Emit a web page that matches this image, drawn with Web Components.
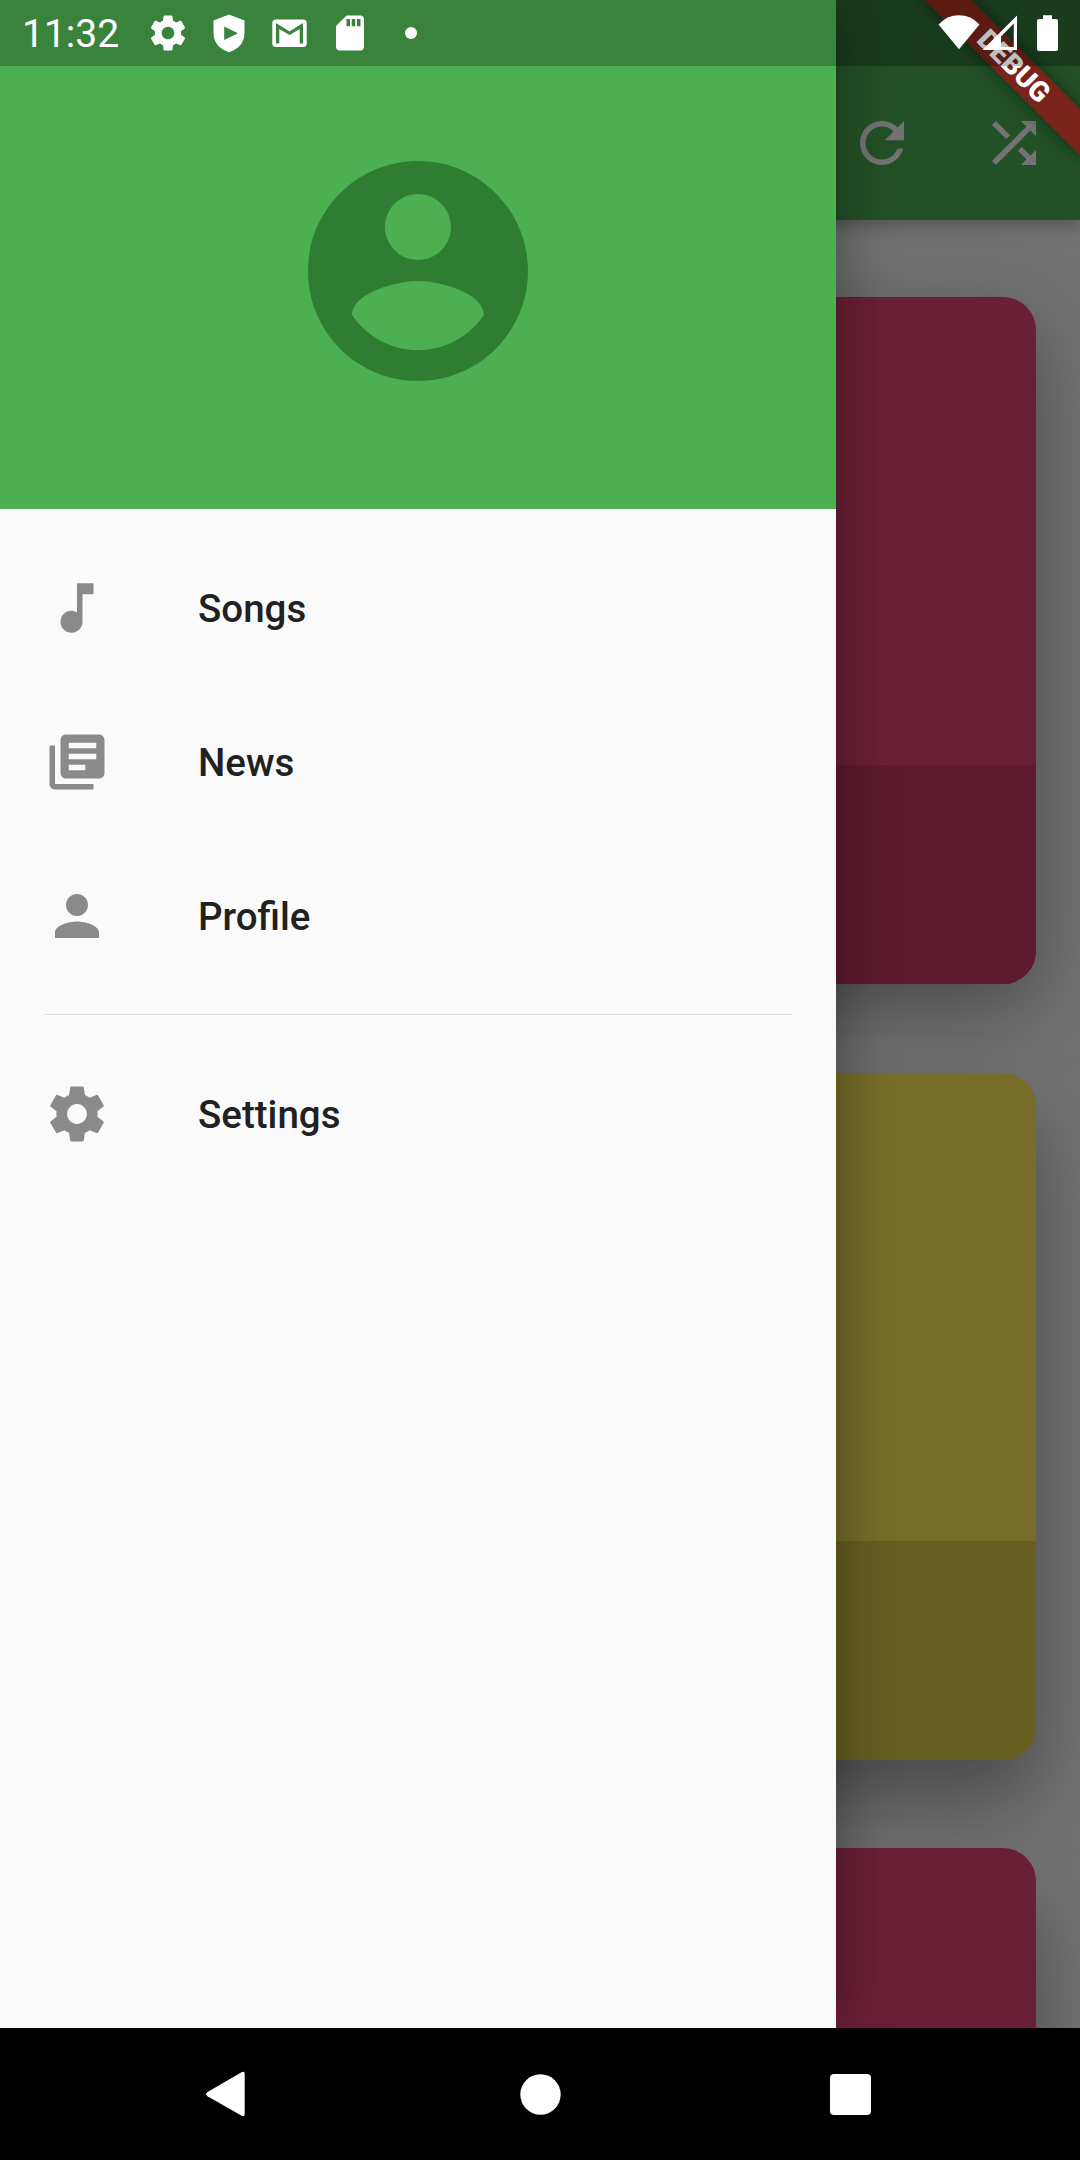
<!DOCTYPE html>
<html lang="en">
<head>
<meta charset="utf-8">
<title>Songs</title>
<style>
html, body { margin: 0; padding: 0; background: #000; }
body { width: 1080px; height: 2160px; overflow: hidden; font-family: Roboto, "Noto Sans", sans-serif; }
</style>
</head>
<body>
<phone-screen>
  <app-page slot="page">
    <app-bar slot="bar">
      <md-icon name="refresh"></md-icon>
      <md-icon name="shuffle"></md-icon>
    </app-bar>
    <song-card style="--top:#6b1f36;--bottom:#5e1a2f;--drop:26px;--shade:.36"></song-card>
    <song-card style="--top:#766d28;--bottom:#665f22;--drop:42px;--shade:.36"></song-card>
    <song-card style="--top:#6b1f36;--bottom:#5e1a2f;--drop:54px;--shade:.36"></song-card>
  </app-page>
  <nav-drawer slot="drawer">
    <md-icon slot="avatar" name="account" style="--size:264px;color:#2f7d32"></md-icon>
    <drawer-item icon="note">Songs</drawer-item>
    <drawer-item icon="library">News</drawer-item>
    <drawer-item icon="person">Profile</drawer-item>
    <drawer-divider></drawer-divider>
    <drawer-item icon="settings">Settings</drawer-item>
  </nav-drawer>
  <debug-banner slot="over">DEBUG</debug-banner>
  <status-bar slot="over">11:32</status-bar>
  <system-nav slot="nav"></system-nav>
</phone-screen>

<script>
const ICONS = {
  refresh: 'M17.65 6.35C16.2 4.9 14.21 4 12 4c-4.42 0-7.99 3.58-7.99 8s3.57 8 7.99 8c3.73 0 6.84-2.55 7.73-6h-2.08c-.82 2.33-3.04 4-5.65 4-3.31 0-6-2.69-6-6s2.69-6 6-6c1.66 0 3.14.69 4.22 1.78L13 11h7V4l-2.35 2.35z',
  shuffle: 'M10.59 9.17L5.41 4 4 5.41l5.17 5.17 1.42-1.41zM14.5 4l2.04 2.04L4 18.59 5.41 20 17.96 7.46 20 9.5V4h-5.5zm.33 9.41l-1.41 1.41 3.13 3.13L14.5 20H20v-5.5l-2.04 2.04-3.13-3.13z',
  account: 'M12 2C6.48 2 2 6.48 2 12s4.48 10 10 10 10-4.48 10-10S17.52 2 12 2zm0 3c1.66 0 3 1.34 3 3s-1.34 3-3 3-3-1.34-3-3 1.34-3 3-3zm0 14.2c-2.5 0-4.71-1.28-6-3.22.03-1.99 4-3.08 6-3.08 1.99 0 5.97 1.09 6 3.08-1.29 1.94-3.5 3.22-6 3.22z',
  note: 'M12 3v10.55c-.59-.34-1.27-.55-2-.55-2.21 0-4 1.79-4 4s1.79 4 4 4 4-1.79 4-4V7h4V3h-6z',
  library: 'M4 6H2v14c0 1.1.9 2 2 2h14v-2H4V6zm16-4H8c-1.1 0-2 .9-2 2v12c0 1.1.9 2 2 2h12c1.1 0 2-.9 2-2V4c0-1.1-.9-2-2-2zm-1 9H9V9h10v2zm-4 4H9v-2h6v2zm4-8H9V5h10v2z',
  person: 'M12 12c2.21 0 4-1.79 4-4s-1.79-4-4-4-4 1.79-4 4 1.79 4 4 4zm0 2c-2.67 0-8 1.34-8 4v2h16v-2c0-2.66-5.33-4-8-4z',
  settings: 'M19.43 12.98c.04-.32.07-.64.07-.98s-.03-.66-.07-.98l2.11-1.65c.19-.15.24-.42.12-.64l-2-3.46c-.12-.22-.39-.3-.61-.22l-2.49 1c-.52-.4-1.08-.73-1.69-.98l-.38-2.65C14.46 2.18 14.25 2 14 2h-4c-.25 0-.46.18-.49.42l-.38 2.65c-.61.25-1.17.59-1.69.98l-2.49-1c-.23-.09-.49 0-.61.22l-2 3.46c-.13.22-.07.49.12.64l2.11 1.65c-.04.32-.07.65-.07.98s.03.66.07.98l-2.11 1.65c-.19.15-.24.42-.12.64l2 3.46c.12.22.39.3.61.22l2.49-1c.52.4 1.08.73 1.69.98l.38 2.65c.03.24.24.42.49.42h4c.25 0 .46-.18.49-.42l.38-2.65c.61-.25 1.17-.59 1.69-.98l2.49 1c.23.09.49 0 .61-.22l2-3.46c.12-.22.07-.49-.12-.64l-2.11-1.65zM12 15.6c-1.98 0-3.6-1.62-3.6-3.6s1.62-3.6 3.6-3.6 3.6 1.62 3.6 3.6-1.62 3.6-3.6 3.6z',
  sd: 'M18 2h-8L4.02 8 4 20c0 1.1.9 2 2 2h12c1.1 0 2-.9 2-2V4c0-1.1-.9-2-2-2zm-6 6.2h-2V4h2v4.2zm3 0h-2V4h2v4.2zm3 0h-2V4h2v4.2z'
};

function define(name, markup) {
  customElements.define(name, class extends HTMLElement {
    constructor() {
      super();
      this.attachShadow({ mode: 'open' }).innerHTML = typeof markup === 'function' ? markup(this) : markup;
    }
  });
}

define('md-icon', el => `
<style>
:host { display: block; flex: none; width: var(--size, 66px); height: var(--size, 66px); }
svg { display: block; width: 100%; height: 100%; fill: currentColor; }
</style>
<svg viewBox="0 0 24 24"><path d="${ICONS[el.getAttribute('name')]}"/></svg>`);

define('phone-screen', `
<style>
:host { display: grid; grid-template: 2028px 132px / 1080px; width: 1080px; height: 2160px; overflow: hidden; position: relative; }
.body { display: grid; grid-template: 2028px / 1080px; overflow: hidden; position: relative; }
slot[name=page]::slotted(*), slot[name=drawer]::slotted(*) { grid-area: 1 / 1; }
</style>
<div class="body"><slot name="page"></slot><slot name="drawer"></slot><slot name="over"></slot></div>
<slot name="nav"></slot>`);

define('app-page', `
<style>
:host { display: flex; flex-direction: column; background: #737373; overflow: hidden; isolation: isolate; }
.list { display: flex; flex-direction: column; gap: 88.3px; padding: 77px 44px 0; }
slot[name=bar]::slotted(*) { z-index: 1; }
</style>
<slot name="bar"></slot>
<div class="list"><slot></slot></div>`);

define('app-bar', `
<style>
:host { display: flex; flex: none; box-sizing: border-box; height: 220px; padding: 66px 33px 0 0; justify-content: flex-end; align-items: center; gap: 66px;
  background: #235127; color: #737373; box-shadow: 0 6px 18px rgba(0,0,0,.28); position: relative; }
</style>
<slot></slot>`);

define('song-card', `
<style>
:host { display: flex; flex-direction: column; flex: none; height: 687.4px; border-radius: 33px; overflow: hidden; background: var(--top);
  box-shadow: 0 var(--drop) 80px rgba(0,0,0,var(--shade)); }
.art { flex: 1; }
.caption { height: 219.5px; background: var(--bottom); }
</style>
<div class="art"></div><div class="caption"></div>`);

define('nav-drawer', `
<style>
:host { display: flex; flex-direction: column; width: 836px; background: #fafafa; box-shadow: 0 0 56px rgba(0,0,0,.4); position: relative; }
header { display: flex; flex: none; box-sizing: border-box; height: 508.75px; padding-top: 139px; justify-content: center; align-items: flex-start; background: #4caf50; }
.items { display: flex; flex-direction: column; padding-top: 22px; }
</style>
<header><slot name="avatar"></slot></header>
<div class="items"><slot></slot></div>`);

define('drawer-item', el => `
<style>
:host { display: flex; align-items: center; height: 154px; padding-left: 44px; gap: 88px; font-size: 38.5px; font-weight: 500; line-height: 1; color: #212121; }
md-icon { color: #8a8a8a; }
span { padding-top: 2px; }
</style>
<md-icon name="${el.getAttribute('icon')}"></md-icon><span><slot></slot></span>`);

define('drawer-divider', `
<style>
:host { display: flex; align-items: center; height: 44px; padding: 0 44px; }
i { flex: 1; height: 1px; background: #e0e0e0; }
</style><i></i>`);

define('debug-banner', `
<style>
:host { position: absolute; right: 0; top: 0; width: 240px; height: 240px; overflow: hidden; }
.band { position: absolute; left: 130px; top: 77px; width: 220px; height: 33px; transform-origin: 110px -77px; transform: rotate(45deg);
  background: linear-gradient(rgba(183,28,28,.627), rgba(183,28,28,.627)), rgba(0,0,0,.42);
  box-shadow: 0 0 17px rgba(0,0,0,.5);
  color: #fff; font-size: 28px; font-weight: 900; line-height: 33px; text-align: center; }
</style>
<div class="band"><slot></slot></div>`);

define('status-bar', `
<style>
:host { position: absolute; left: 0; top: 0; box-sizing: border-box; width: 1080px; height: 66px; padding: 0 22px; display: flex; align-items: center;
  background: rgba(0,0,0,.25); color: #fff; font-size: 39px; line-height: 66px; }
.time { width: 115.3px; padding-top: 2px; }
.cell { width: 60.9px; height: 66px; display: flex; align-items: center; justify-content: center; }
.gap { flex: 1; }
svg { display: block; flex: none; fill: #fff; }
.sig { margin-left: 2px; } .bat { margin-left: 19px; }
</style>
<span class="time"><slot></slot></span>
<span class="cell"><md-icon name="settings" style="--size:42px"></md-icon></span>
<span class="cell"><svg width="32" height="66" viewBox="0 0 32 66"><path fill-rule="evenodd" d="M16 14.5L31.5 20.5V32.5Q31.5 47 16 52.3Q.5 47 .5 32.5V20.5ZM11.2 26.5V40L25 33.2Z"/></svg></span>
<span class="cell"><svg width="35" height="66" viewBox="0 0 35 66"><path fill-rule="evenodd" d="M4 19.5H31Q34.7 19.5 34.7 23V43.5Q34.7 47 31 47H4Q.3 47 .3 43.5V23Q.3 19.5 4 19.5ZM4 23V43.5H7.3V29L17.5 35L27.7 29V43.5H31V23L17.5 31.5Z"/></svg></span>
<span class="cell"><md-icon name="sd" style="--size:42px"></md-icon></span>
<span class="cell"><svg width="12" height="66"><circle cx="6" cy="33" r="6"/></svg></span>
<span class="gap"></span>
<svg width="42" height="66" viewBox="0 0 42 66"><path d="M.5 24.5Q9 15.3 21 15.3T41.5 24.5L21 49.3Z"/></svg>
<svg class="sig" width="36" height="66" viewBox="0 0 36 66"><path fill-rule="evenodd" d="M.5 50L35 15.5V50ZM19 47H31.8V23.5L19 36.5Z"/></svg>
<svg class="bat" width="21" height="66" viewBox="0 0 21 66"><path d="M6 15.3H15V19H19Q21 19 21 21V49Q21 51 19 51H2Q0 51 0 49V21Q0 19 2 19H6Z"/></svg>`);

define('system-nav', `
<style>
:host { display: flex; align-items: center; justify-content: space-between; box-sizing: border-box; padding: 0 209px 0 206px; background: #000; }
svg { display: block; fill: #fff; }
.back { margin-right: 4.6px; }
</style>
<svg class="back" width="40" height="46" viewBox="0 0 40 46"><path d="M35.2 1.4Q38.7-.4 38.7 3V43Q38.7 46.4 35.2 44.6L1.5 25.3Q-1.2 23.2 1.5 21Z"/></svg>
<svg width="41" height="41" viewBox="0 0 41 41"><circle cx="20.5" cy="20.5" r="20.2"/></svg>
<svg width="41" height="41" viewBox="0 0 41 41"><rect width="41" height="41" rx="4"/></svg>`);
</script>
</body>
</html>
